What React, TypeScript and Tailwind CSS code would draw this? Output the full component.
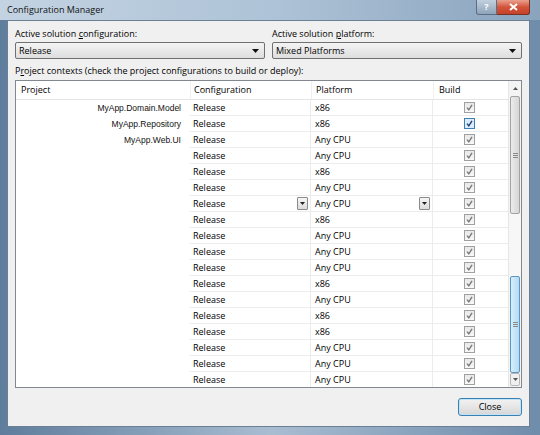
import React from 'react';

type Row = { project?: string; config: string; platform: string; dropdown?: boolean; focused?: boolean };

const rows: Row[] = [
  { project: 'MyApp.Domain.Model', config: 'Release', platform: 'x86' },
  { project: 'MyApp.Repository', config: 'Release', platform: 'x86', focused: true },
  { project: 'MyApp.Web.UI', config: 'Release', platform: 'Any CPU' },
  { config: 'Release', platform: 'Any CPU' },
  { config: 'Release', platform: 'x86' },
  { config: 'Release', platform: 'Any CPU' },
  { config: 'Release', platform: 'Any CPU', dropdown: true },
  { config: 'Release', platform: 'x86' },
  { config: 'Release', platform: 'Any CPU' },
  { config: 'Release', platform: 'Any CPU' },
  { config: 'Release', platform: 'Any CPU' },
  { config: 'Release', platform: 'x86' },
  { config: 'Release', platform: 'Any CPU' },
  { config: 'Release', platform: 'x86' },
  { config: 'Release', platform: 'x86' },
  { config: 'Release', platform: 'Any CPU' },
  { config: 'Release', platform: 'Any CPU' },
  { config: 'Release', platform: 'Any CPU' },
];

const Arrow = () => (
  <svg width="7" height="4" viewBox="0 0 7 4">
    <path d="M0 0h7L3.5 4z" fill="#111" />
  </svg>
);

const Combo = ({ value }: { value: string }) => (
  <div className="h-[17px] flex items-center justify-between rounded-[2px] border border-[#707070] bg-gradient-to-b from-[#f4f4f4] to-[#dedede] pl-[3px] pr-[5px]">
    <span>{value}</span>
    <Arrow />
  </div>
);

const CellButton = () => (
  <div className="w-[11px] h-[13px] flex items-center justify-center rounded-[1px] border border-[#8a8a8a] bg-gradient-to-b from-[#f6f6f6] to-[#dcdcdc]">
    <svg width="5" height="3" viewBox="0 0 5 3">
      <path d="M0 0h5L2.5 3z" fill="#222" />
    </svg>
  </div>
);

const Check = ({ active }: { active?: boolean }) => (
  <div
    className={
      active
        ? 'w-[11px] h-[11px] flex items-center justify-center border border-[#3c7fb1] bg-[#dcecfc]'
        : 'w-[11px] h-[11px] flex items-center justify-center border border-[#a0a0a0] bg-gradient-to-b from-[#e8e8e8] to-[#f8f8f8]'
    }
  >
    <svg width="7" height="7" viewBox="0 0 7 7">
      <path d="M1 3.6l1.8 2.2L6 0.8" fill="none" stroke={active ? '#1c3f7a' : '#7a7a7a'} strokeWidth="1.4" />
    </svg>
  </div>
);

const Grip = () => (
  <div className="flex flex-col gap-[1px]">
    <div className="w-[5px] h-px bg-[#8a8a8a]" />
    <div className="w-[5px] h-px bg-[#8a8a8a]" />
    <div className="w-[5px] h-px bg-[#8a8a8a]" />
  </div>
);

export default function App() {
  return (
    <div
      className="w-[540px] h-[435px] flex flex-col bg-gradient-to-r from-[#5f7d9c] via-[#a9bdd1] to-[#6f8cab] text-[9px] text-black overflow-hidden"
      style={{ fontFamily: '"Open Sans", "Noto Sans", sans-serif' }}
    >
      {/* title bar */}
      <div className="h-[20px] flex items-start bg-gradient-to-r from-[#c3d3e2] via-[#aec3d7] to-[#8aa4be]">
        <div className="pl-[7px] pt-[3px] flex-1 text-[#111]">Configuration Manager</div>
        <div className="flex mr-[10px]">
          <div className="w-[21px] h-[15px] flex items-center justify-center rounded-bl-[3px] border border-t-0 border-[#5a6f86] bg-gradient-to-b from-[#c2d0de] to-[#8fa4ba] text-white font-bold text-[9px]">
            ?
          </div>
          <div className="w-[33px] h-[15px] flex items-center justify-center rounded-br-[3px] border border-t-0 border-l-0 border-[#7a3022] bg-gradient-to-b from-[#e9a08f] via-[#d2543b] to-[#c4432a]">
            <svg width="9" height="8" viewBox="0 0 9 8">
              <path d="M1 1l7 6M8 1L1 7" stroke="#fff" strokeWidth="2" />
            </svg>
          </div>
        </div>
      </div>

      {/* client area */}
      <div className="mx-[7px] mb-[8px] mr-[10px] flex-1 flex flex-col bg-[#f0f0f0] border border-[#6b7f95] px-[7px]">
        <div className="flex gap-[7px] mt-[7px]">
          <div className="flex-1 flex flex-col">
            <div className="h-[12px] leading-[12px] mb-[2px]">
              Active solution <span className="underline">c</span>onfiguration:
            </div>
            <Combo value="Release" />
          </div>
          <div className="flex-1 flex flex-col">
            <div className="h-[12px] leading-[12px] mb-[2px]">
              Active solution <span className="underline">p</span>latform:
            </div>
            <Combo value="Mixed Platforms" />
          </div>
        </div>

        <div className="h-[12px] leading-[12px] mt-[6px]">
          P<span className="underline">r</span>oject contexts (check the project configurations to build or deploy):
        </div>

        {/* grid */}
        <div className="mt-[3px] h-[308px] flex border border-[#828790] bg-white overflow-hidden">
          <div className="flex-1 flex flex-col overflow-hidden">
            <div className="h-[19px] shrink-0 grid grid-cols-[174px_121px_122px_1fr] items-center border-b border-[#e5e5e5]">
              <div className="pl-[5px]">Project</div>
              <div className="pl-[3px] h-full flex items-center border-l border-[#f0f0f0]">Configuration</div>
              <div className="pl-[4px] h-full flex items-center border-l border-[#f0f0f0]">Platform</div>
              <div className="pl-[5px] h-full flex items-center border-l border-[#f0f0f0]">Build</div>
            </div>
            {rows.map((r, i) => (
              <div key={i} className="h-[16px] shrink-0 grid grid-cols-[174px_121px_122px_1fr] items-stretch">
                <div
                  className="flex items-center justify-end pr-[9px] text-[8.5px] text-[#111]"
                  style={{ fontFamily: '"Liberation Sans", Arial, sans-serif' }}
                >
                  {r.project}
                </div>
                <div className="flex items-center justify-between pl-[3px] pr-[2px] border-b border-r border-[#ececec]">
                  <span>{r.config}</span>
                  {r.dropdown && <CellButton />}
                </div>
                <div className="flex items-center justify-between pl-[4px] pr-[2px] border-b border-r border-[#ececec]">
                  <span>{r.platform}</span>
                  {r.dropdown && <CellButton />}
                </div>
                <div className="flex items-center justify-center pr-[3px] border-b border-[#ececec]">
                  <Check active={r.focused} />
                </div>
              </div>
            ))}
          </div>

          {/* scrollbar */}
          <div className="w-[13px] shrink-0 flex flex-col bg-[#f4f4f4] border-l border-[#e6e6e6]">
            <div className="h-[15px] flex items-center justify-center">
              <svg width="5" height="3" viewBox="0 0 5 3">
                <path d="M0 3h5L2.5 0z" fill="#555" />
              </svg>
            </div>
            <div className="h-[118px] mx-[1px] flex items-center justify-center rounded-[2px] border border-[#a2a2a2] bg-gradient-to-r from-[#ececec] to-[#d6d6d6]">
              <Grip />
            </div>
            <div className="h-[62px] bg-[#f7f7f7]" />
            <div className="flex-1 mx-[1px] flex items-center justify-center rounded-[2px] border border-[#5a97c4] bg-gradient-to-r from-[#d6eefb] to-[#b4dcf2]">
              <Grip />
            </div>
            <div className="h-[13px] mx-[1px] mb-[1px] flex items-center justify-center rounded-[2px] border border-[#b8b8b8] bg-[#f0f0f0]">
              <svg width="5" height="3" viewBox="0 0 5 3">
                <path d="M0 0h5L2.5 3z" fill="#555" />
              </svg>
            </div>
          </div>
        </div>

        <div className="flex justify-end mt-[10px]">
          <button className="w-[64px] h-[18px] rounded-[3px] border border-[#3c7fb1] bg-gradient-to-b from-[#f2f2f2] via-[#e6e6e6] to-[#d6d6d6] shadow-[inset_0_0_0_1px_#bfe4f7] text-[9px]">
            Close
          </button>
        </div>
      </div>
    </div>
  );
}
